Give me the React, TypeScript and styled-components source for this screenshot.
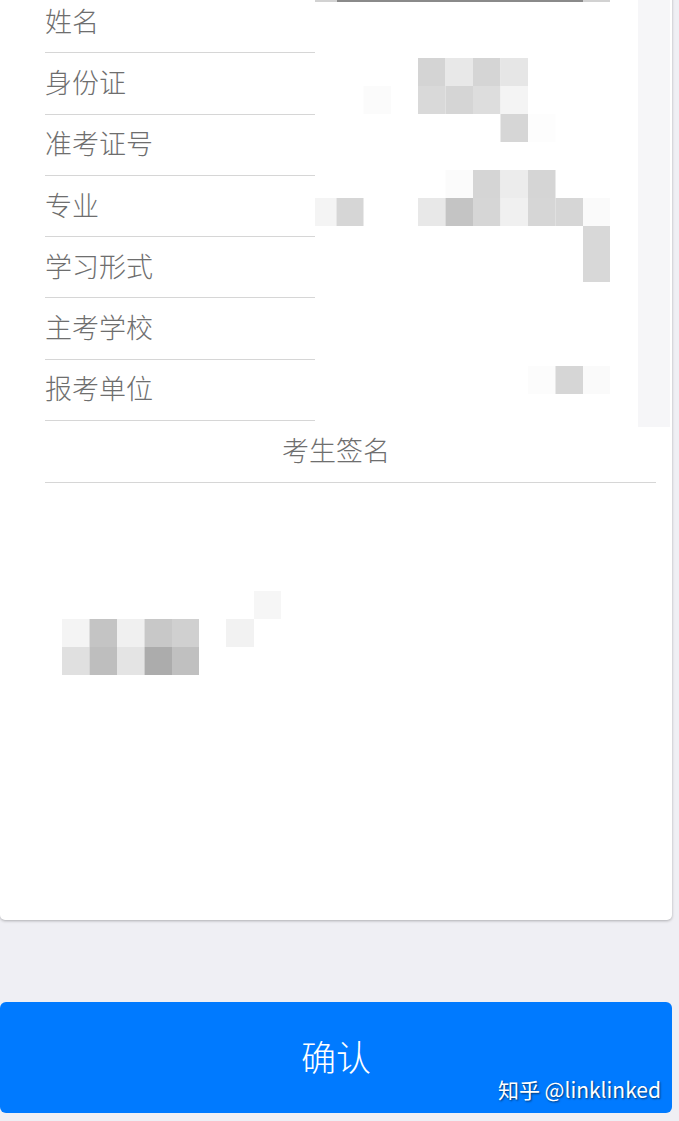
import styled, { createGlobalStyle } from 'styled-components';

type Cell = [number, number, number, number, string];

const GlobalStyle = createGlobalStyle`
  html, body {
    margin: 0;
    padding: 0;
    background: #efeff4;
  }
  body {
    font-family: 'Noto Sans CJK SC', 'Noto Sans', sans-serif;
  }
`;

const Page = styled.div`
  display: flex;
  flex-direction: column;
  width: 679px;
  overflow: hidden;
`;

const Card = styled.div`
  display: flex;
  flex-direction: column;
  width: 672px;
  margin-top: -8px;
  background: #ffffff;
  border-radius: 0 0 5px 5px;
  box-shadow: 0 1px 3px rgba(0, 0, 0, 0.28);
`;

const InfoSection = styled.div`
  display: flex;
  align-items: flex-start;
  height: 429px;
`;

const LabelList = styled.div`
  display: flex;
  flex-direction: column;
  width: 270px;
  margin-left: 45px;
`;

const Row = styled.div`
  box-sizing: border-box;
  display: flex;
  align-items: center;
  height: 61.3px;
  padding-bottom: 4px;
  border-bottom: 1px solid #d6d6d6;
`;

const Label = styled.span`
  font-size: 27px;
  font-weight: 300;
  line-height: 1;
  color: #6e6e6e;
`;

/* pale column on the right; it runs a little past the last row */
const Strip = styled.div`
  width: 32px;
  height: 435px;
  margin-left: 28px;
  background: #f6f6f8;
`;

const SignatureHeader = styled.div`
  box-sizing: border-box;
  display: flex;
  align-items: center;
  justify-content: center;
  height: 62px;
  margin: 0 16px 0 45px;
  padding: 0 29px 4px 0;
  border-bottom: 1px solid #d6d6d6;
  font-size: 27px;
  font-weight: 300;
  color: #6e6e6e;
`;

const Gap = styled.div<{ $h: number }>`
  height: ${(p) => p.$h}px;
  flex-shrink: 0;
`;

const ConfirmButton = styled.button`
  position: relative;
  display: flex;
  align-items: center;
  justify-content: center;
  width: 672px;
  height: 111px;
  padding: 0 0 4px 0;
  border: none;
  border-radius: 6px;
  background: #007aff;
  color: #ffffff;
  font-family: 'Noto Sans CJK SC', 'Noto Sans', sans-serif;
  font-size: 35px;
  font-weight: 300;
  cursor: pointer;
`;

const Watermark = styled.span`
  position: absolute;
  right: 11px;
  bottom: 9px;
  font-family: 'Noto Sans CJK SC', 'Noto Sans', sans-serif;
  font-size: 21px;
  font-weight: 400;
  color: #ffffff;
  text-shadow: 1px 1px 2px rgba(0, 0, 0, 0.55);
`;

const labels = ['姓名', '身份证', '准考证号', '专业', '学习形式', '主考学校', '报考单位'];

const valueCells: Cell[] = [
  [315, 0, 22, 2, '#d2d2d2'],
  [337, 0, 246, 2, '#8a8a8a'],
  [583, 0, 27, 2, '#d2d2d2'],
  [418, 58, 27.5, 28, '#d4d4d4'],
  [445.5, 58, 27.5, 28, '#e8e8e8'],
  [473, 58, 27.5, 28, '#d5d5d5'],
  [500.5, 58, 27.5, 28, '#e6e6e6'],
  [363.5, 86, 27.5, 28, '#fbfbfb'],
  [418, 86, 27.5, 28, '#d9d9d9'],
  [445.5, 86, 27.5, 28, '#d5d5d5'],
  [473, 86, 27.5, 28, '#dddddd'],
  [500.5, 86, 27.5, 28, '#f4f4f4'],
  [500.5, 114, 27.5, 28, '#d6d6d6'],
  [528, 114, 27.5, 28, '#fdfdfd'],
  [445.5, 170, 27.5, 28, '#fbfbfb'],
  [473, 170, 27.5, 28, '#d5d5d5'],
  [500.5, 170, 27.5, 28, '#ececec'],
  [528, 170, 27.5, 28, '#d5d5d5'],
  [315, 198, 21.5, 28, '#f4f4f4'],
  [336.5, 198, 27, 28, '#d6d6d6'],
  [418, 198, 27.5, 28, '#e8e8e8'],
  [445.5, 198, 27.5, 28, '#c4c4c4'],
  [473, 198, 27.5, 28, '#d6d6d6'],
  [500.5, 198, 27.5, 28, '#f0f0f0'],
  [528, 198, 27.5, 28, '#d6d6d6'],
  [555.5, 198, 27.5, 28, '#d6d6d6'],
  [583, 198, 27, 28, '#fafafa'],
  [583, 226, 27, 56, '#d8d8d8'],
  [528, 366, 27.5, 28, '#fcfcfc'],
  [555.5, 366, 27.5, 28, '#d6d6d6'],
  [583, 366, 27, 28, '#fafafa'],
];

const signatureCells: Cell[] = [
  [254, 591, 27, 28, '#f6f6f6'],
  [226, 619, 28, 28, '#f2f2f2'],
  [62, 619, 27.5, 28, '#f4f4f4'],
  [89.5, 619, 27.5, 28, '#c4c4c4'],
  [117, 619, 27.5, 28, '#f0f0f0'],
  [144.5, 619, 27.5, 28, '#c8c8c8'],
  [172, 619, 27, 28, '#d0d0d0'],
  [62, 647, 27.5, 28, '#e0e0e0'],
  [89.5, 647, 27.5, 28, '#bebebe'],
  [117, 647, 27.5, 28, '#e4e4e4'],
  [144.5, 647, 27.5, 28, '#acacac'],
  [172, 647, 27, 28, '#c0c0c0'],
];

// blurred (pixelated) content, drawn from page coordinates
const Mosaic = ({
  cells,
  width,
  height,
  originX,
  originY,
}: {
  cells: Cell[];
  width: number;
  height: number;
  originX: number;
  originY: number;
}) => (
  <svg width={width} height={height} style={{ display: 'block', flexShrink: 0 }}>
    {cells.map(([x, y, w, h, c], i) => (
      <rect key={i} x={x - originX} y={y - originY} width={w} height={h} fill={c} />
    ))}
  </svg>
);

export default function App() {
  return (
    <Page>
      <GlobalStyle />
      <Card>
        <InfoSection>
          <LabelList>
            {labels.map((l) => (
              <Row key={l}>
                <Label>{l}</Label>
              </Row>
            ))}
          </LabelList>
          <Mosaic cells={valueCells} width={295} height={429} originX={315} originY={-8} />
          <Strip />
        </InfoSection>
        <SignatureHeader>考生签名</SignatureHeader>
        <Mosaic cells={signatureCells} width={672} height={437} originX={0} originY={483} />
      </Card>
      <Gap $h={82} />
      <ConfirmButton>
        确认
        <Watermark>知乎 @linklinked</Watermark>
      </ConfirmButton>
      <Gap $h={8} />
    </Page>
  );
}
